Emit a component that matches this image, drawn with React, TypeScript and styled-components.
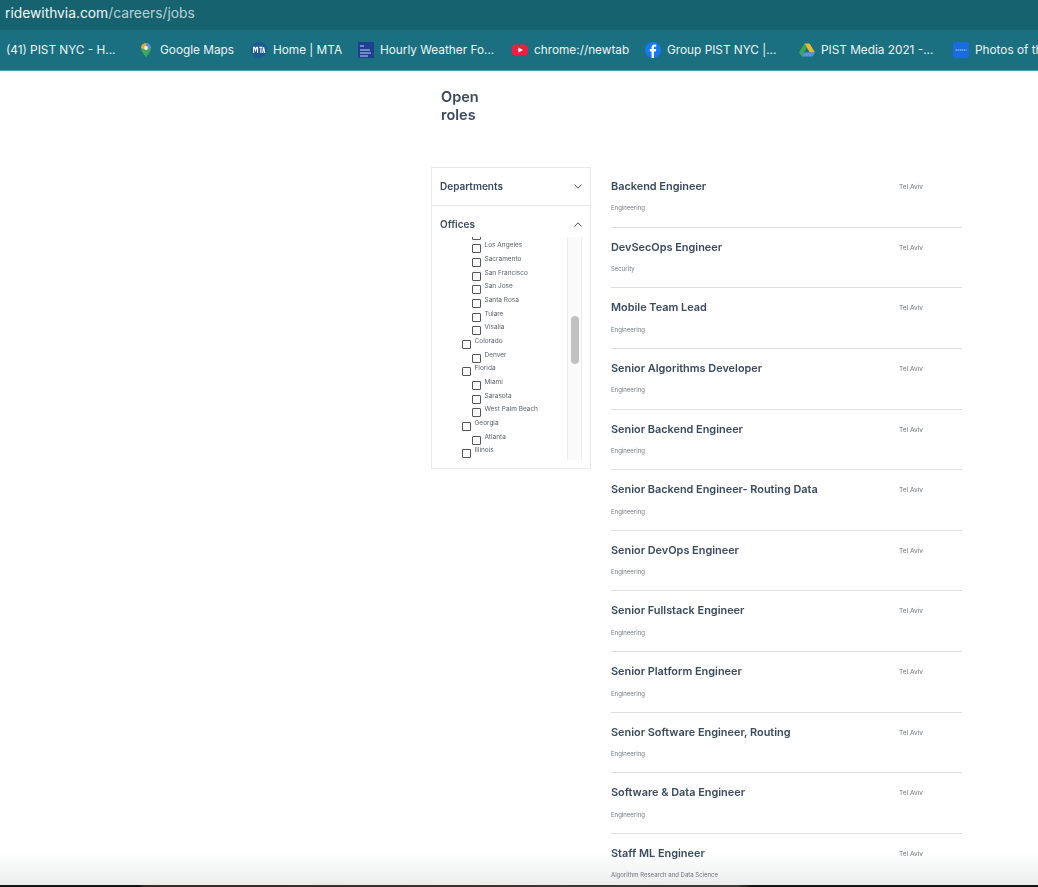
import React from 'react';
import styled, { createGlobalStyle } from 'styled-components';

const GlobalStyle = createGlobalStyle`
  html, body {
    margin: 0;
    padding: 0;
    background: #fff;
    font-family: Inter, "Liberation Sans", sans-serif;
  }
`;

const jobs = [
  { title: 'Backend Engineer', team: 'Engineering' },
  { title: 'DevSecOps Engineer', team: 'Security' },
  { title: 'Mobile Team Lead', team: 'Engineering' },
  { title: 'Senior Algorithms Developer', team: 'Engineering' },
  { title: 'Senior Backend Engineer', team: 'Engineering' },
  { title: 'Senior Backend Engineer- Routing Data', team: 'Engineering' },
  { title: 'Senior DevOps Engineer', team: 'Engineering' },
  { title: 'Senior Fullstack Engineer', team: 'Engineering' },
  { title: 'Senior Platform Engineer', team: 'Engineering' },
  { title: 'Senior Software Engineer, Routing', team: 'Engineering' },
  { title: 'Software & Data Engineer', team: 'Engineering' },
  { title: 'Staff ML Engineer', team: 'Algorithm Research and Data Science' },
];

const offices = [
  { name: '', level: 2 },
  { name: 'Los Angeles', level: 2 },
  { name: 'Sacramento', level: 2 },
  { name: 'San Francisco', level: 2 },
  { name: 'San Jose', level: 2 },
  { name: 'Santa Rosa', level: 2 },
  { name: 'Tulare', level: 2 },
  { name: 'Visalia', level: 2 },
  { name: 'Colorado', level: 1 },
  { name: 'Denver', level: 2 },
  { name: 'Florida', level: 1 },
  { name: 'Miami', level: 2 },
  { name: 'Sarasota', level: 2 },
  { name: 'West Palm Beach', level: 2 },
  { name: 'Georgia', level: 1 },
  { name: 'Atlanta', level: 2 },
  { name: 'Illinois', level: 1 },
];

const MapsIcon = () => (
  <svg width="16" height="16" viewBox="0 0 16 16">
    <path d="M8 15.5C6.6 12.6 3 10 3 6a5 5 0 0 1 10 0c0 4-3.6 6.6-5 9.5z" fill="#3fa65a" />
    <path d="M4.4 2.6A5 5 0 0 1 8 1v3.5L5.5 7 3 6a5 5 0 0 1 1.4-3.4z" fill="#e8a93b" />
    <path d="M8 1a5 5 0 0 1 5 5L8 8z" fill="#5b8fd8" />
    <circle cx="8" cy="6" r="1.9" fill="#f4f1e4" />
  </svg>
);

const MtaIcon = () => (
  <svg width="16" height="16" viewBox="0 0 16 16">
    <circle cx="8" cy="8" r="8" fill="#1f5a96" />
    <path d="M2.6 11V5.4h1l1 3 1-3h1V11M8.4 5.4h3M9.9 5.4V11M11.6 11l1-5.6 1.2 5.6" fill="none" stroke="#fff" strokeWidth="1.1" />
  </svg>
);

const WeatherIcon = () => (
  <svg width="16" height="16" viewBox="0 0 16 16">
    <rect width="16" height="16" fill="#1d3f94" />
    <path d="M2 4h4M2 8h10M2 11h11M2 14h8" stroke="#c9d5ee" strokeWidth="1.2" />
  </svg>
);

const YoutubeIcon = () => (
  <svg width="16" height="16" viewBox="0 0 16 16">
    <rect y="2.5" width="16" height="11" rx="3.5" fill="#e8213f" />
    <path d="M6.4 5.4 11 8l-4.600 2.600z" fill="#fff" />
  </svg>
);

const FacebookIcon = () => (
  <svg width="16" height="16" viewBox="0 0 16 16">
    <circle cx="8" cy="8" r="8" fill="#1877f2" />
    <path d="M8.900 16V9.400h2l.3-2.300H8.900V5.800c0-.7.3-1.100 1.100-1.100h1.200V2.700c-.5-.1-1.100-.1-1.700-.1-1.800 0-2.900 1-2.900 3v1.500H4.800v2.300h1.800V16z" fill="#fff" />
  </svg>
);

const DriveIcon = () => (
  <svg width="16" height="16" viewBox="0 0 16 16">
    <path d="M5.4 1.500h5.200L16 10.500h-5.200z" fill="#e6b93a" />
    <path d="M5.400 1.500 0 10.500l2.600 4 5.300-9z" fill="#3ea55c" />
    <path d="M2.600 14.500h10.800l2.600-4H5.200z" fill="#5a93dd" />
  </svg>
);

const PhotosIcon = () => (
  <svg width="16" height="16" viewBox="0 0 16 16">
    <rect width="16" height="16" rx="2" fill="#1a6ae0" />
    <path d="M2.500 8h11" stroke="#b9d2f6" strokeWidth="1" strokeDasharray="1.500 0.500" />
  </svg>
);

const bookmarks = [
  { label: '(41) PIST NYC - H...', icon: null, width: 111, gap: 21 },
  { label: 'Google Maps', icon: <MapsIcon />, width: 74, gap: 17 },
  { label: 'Home | MTA', icon: <MtaIcon />, width: 68, gap: 17 },
  { label: 'Hourly Weather Fo...', icon: <WeatherIcon />, width: 115, gap: 17 },
  { label: 'chrome://newtab', icon: <YoutubeIcon />, width: 94, gap: 17 },
  { label: 'Group PIST NYC |...', icon: <FacebookIcon />, width: 108, gap: 24 },
  { label: 'PIST Media 2021 -...', icon: <DriveIcon />, width: 113, gap: 19 },
  { label: 'Photos of the', icon: <PhotosIcon />, width: 80, gap: 0 },
];

const Chevron = ({ up }: { up?: boolean }) => (
  <svg width="8" height="5" viewBox="0 0 8 5">
    <path d={up ? 'M.6 4.400 4 .8l3.400 3.600' : 'M.6.6 4 4.200 7.400.6'} fill="none" stroke="#2d3d50" strokeWidth="0.9" />
  </svg>
);

export default function App() {
  return (
    <Page>
      <GlobalStyle />
      <AddressBar>
        <Host>ridewithvia.com</Host>
        <AddressPath>/careers/jobs</AddressPath>
      </AddressBar>
      <BookmarksBar>
        {bookmarks.map((b) => (
          <Bookmark key={b.label} $gap={b.gap}>
            {b.icon}
            <BookmarkLabel $width={b.width}>{b.label}</BookmarkLabel>
          </Bookmark>
        ))}
      </BookmarksBar>
      <Content>
        <Heading>
          Open
          <br />
          roles
        </Heading>
        <Columns>
          <Filters>
            <FilterHeader>
              <span>Departments</span>
              <Chevron />
            </FilterHeader>
            <OfficesHeader>
              <span>Offices</span>
              <Chevron up />
            </OfficesHeader>
            <ScrollArea>
              <Tree>
                {offices.map((o, i) => (
                  <TreeRow key={i} $level={o.level}>
                    <Box />
                    <TreeLabel>{o.name}</TreeLabel>
                  </TreeRow>
                ))}
              </Tree>
              <ScrollTrack>
                <ScrollThumb />
              </ScrollTrack>
            </ScrollArea>
          </Filters>
          <JobList>
            {jobs.map((job) => (
              <Job key={job.title}>
                <JobTop>
                  <JobTitle>{job.title}</JobTitle>
                  <Location>Tel Aviv</Location>
                </JobTop>
                <Team>{job.team}</Team>
              </Job>
            ))}
          </JobList>
        </Columns>
      </Content>
      <BottomFade />
    </Page>
  );
}

const Page = styled.div`
  position: relative;
  width: 1038px;
  height: 887px;
  overflow: hidden;
  background: #fff;
`;

const AddressBar = styled.div`
  height: 30px;
  box-sizing: border-box;
  padding: 4px 0 0 5px;
  background: #17626f;
  font-size: 13.800px;
  line-height: 18px;
  white-space: nowrap;
`;

const Host = styled.span`
  color: #f2f7f8;
`;

const AddressPath = styled.span`
  color: #b4d0d5;
`;

const BookmarksBar = styled.div`
  display: flex;
  align-items: center;
  height: 41px;
  box-sizing: border-box;
  padding: 0 0 1px 6px;
  background: #1a7080;
  border-bottom: 1px solid #4aa5ad;
  overflow: hidden;
`;

const Bookmark = styled.div<{ $gap: number }>`
  display: flex;
  align-items: center;
  flex: none;
  gap: 6px;
  margin-right: ${({ $gap }) => $gap}px;
`;

const BookmarkLabel = styled.span<{ $width: number }>`
  width: ${({ $width }) => $width}px;
  color: #eef5f6;
  font-size: 11.800px;
  white-space: nowrap;
`;

const Content = styled.main`
  padding: 17px 0 0 431px;
  will-change: transform;
`;

const Heading = styled.h1`
  margin: 0 0 43px 10px;
  color: #3a4a5e;
  font-size: 14.500px;
  font-weight: 600;
  line-height: 18px;
`;

const Columns = styled.div`
  display: flex;
  align-items: flex-start;
  gap: 20px;
`;

const Filters = styled.aside`
  width: 160px;
  height: 302px;
  box-sizing: border-box;
  border: 1px solid #e8e9ea;
  flex: none;
`;

const FilterHeader = styled.div`
  display: flex;
  justify-content: space-between;
  align-items: center;
  height: 38px;
  box-sizing: border-box;
  padding: 0 8px 1px;
  border-bottom: 1px solid #e8e9ea;
  color: #3a4a5e;
  font-size: 10px;
  font-weight: 600;
`;

const OfficesHeader = styled(FilterHeader)`
  height: 31px;
  padding-top: 5px;
  padding-bottom: 0;
  border-bottom: 0;
`;

const ScrollArea = styled.div`
  display: flex;
  justify-content: space-between;
  height: 223px;
  padding-right: 8px;
  overflow: hidden;
`;

const Tree = styled.div`
  margin-top: -9.300px;
  height: 232px;
  overflow: hidden;
`;

const TreeRow = styled.div<{ $level: number }>`
  display: flex;
  align-items: flex-start;
  gap: 3.500px;
  height: 13.670px;
  padding-left: ${({ $level }) => ($level === 2 ? 40 : 30)}px;
`;

const Box = styled.span`
  width: 9px;
  height: 9px;
  margin-top: 3px;
  flex: none;
  box-sizing: border-box;
  border: 1px solid #555;
  border-radius: 1px;
`;

const TreeLabel = styled.span`
  color: #5a6068;
  font-size: 6.500px;
  line-height: 9px;
  white-space: nowrap;
`;

const ScrollTrack = styled.div`
  position: relative;
  width: 15px;
  height: 100%;
  box-sizing: border-box;
  background: #fafafa;
  border-left: 1px solid #ececec;
  border-right: 1px solid #ececec;
`;

const ScrollThumb = styled.div`
  position: absolute;
  top: 79px;
  left: 3px;
  width: 8px;
  height: 48px;
  border-radius: 4px;
  background: #c1c1c1;
`;

const JobList = styled.div`
  width: 351px;
  flex: none;
`;

const Job = styled.article`
  height: 60.650px;
  box-sizing: border-box;
  padding-top: 11.950px;
  border-bottom: 1px solid #dcdddd;

  &:last-child {
    border-bottom: 0;
  }
`;

const JobTop = styled.div`
  display: flex;
  align-items: center;
`;

const JobTitle = styled.div`
  width: 288px;
  flex: none;
  color: #3a4a5e;
  font-size: 10.900px;
  font-weight: 600;
  line-height: 14px;
`;

const Location = styled.div`
  color: #6d7278;
  font-size: 6.500px;
  padding-top: 2px;
`;

const Team = styled.div`
  margin-top: 11.450px;
  color: #74797f;
  font-size: 6px;
  line-height: 8px;
`;

const BottomFade = styled.div`
  position: absolute;
  left: 0;
  right: 0;
  bottom: 0;
  height: 34px;
  box-sizing: border-box;
  background: linear-gradient(rgba(236, 238, 238, 0), #eceeee 94%);
  border-bottom: 2px solid #141414;
  border-image: linear-gradient(90deg, #141414 13.500%, #3a2a24 14%, #3f3a34 71%, #141414 72.500%) 1;
  mix-blend-mode: multiply;
`;
